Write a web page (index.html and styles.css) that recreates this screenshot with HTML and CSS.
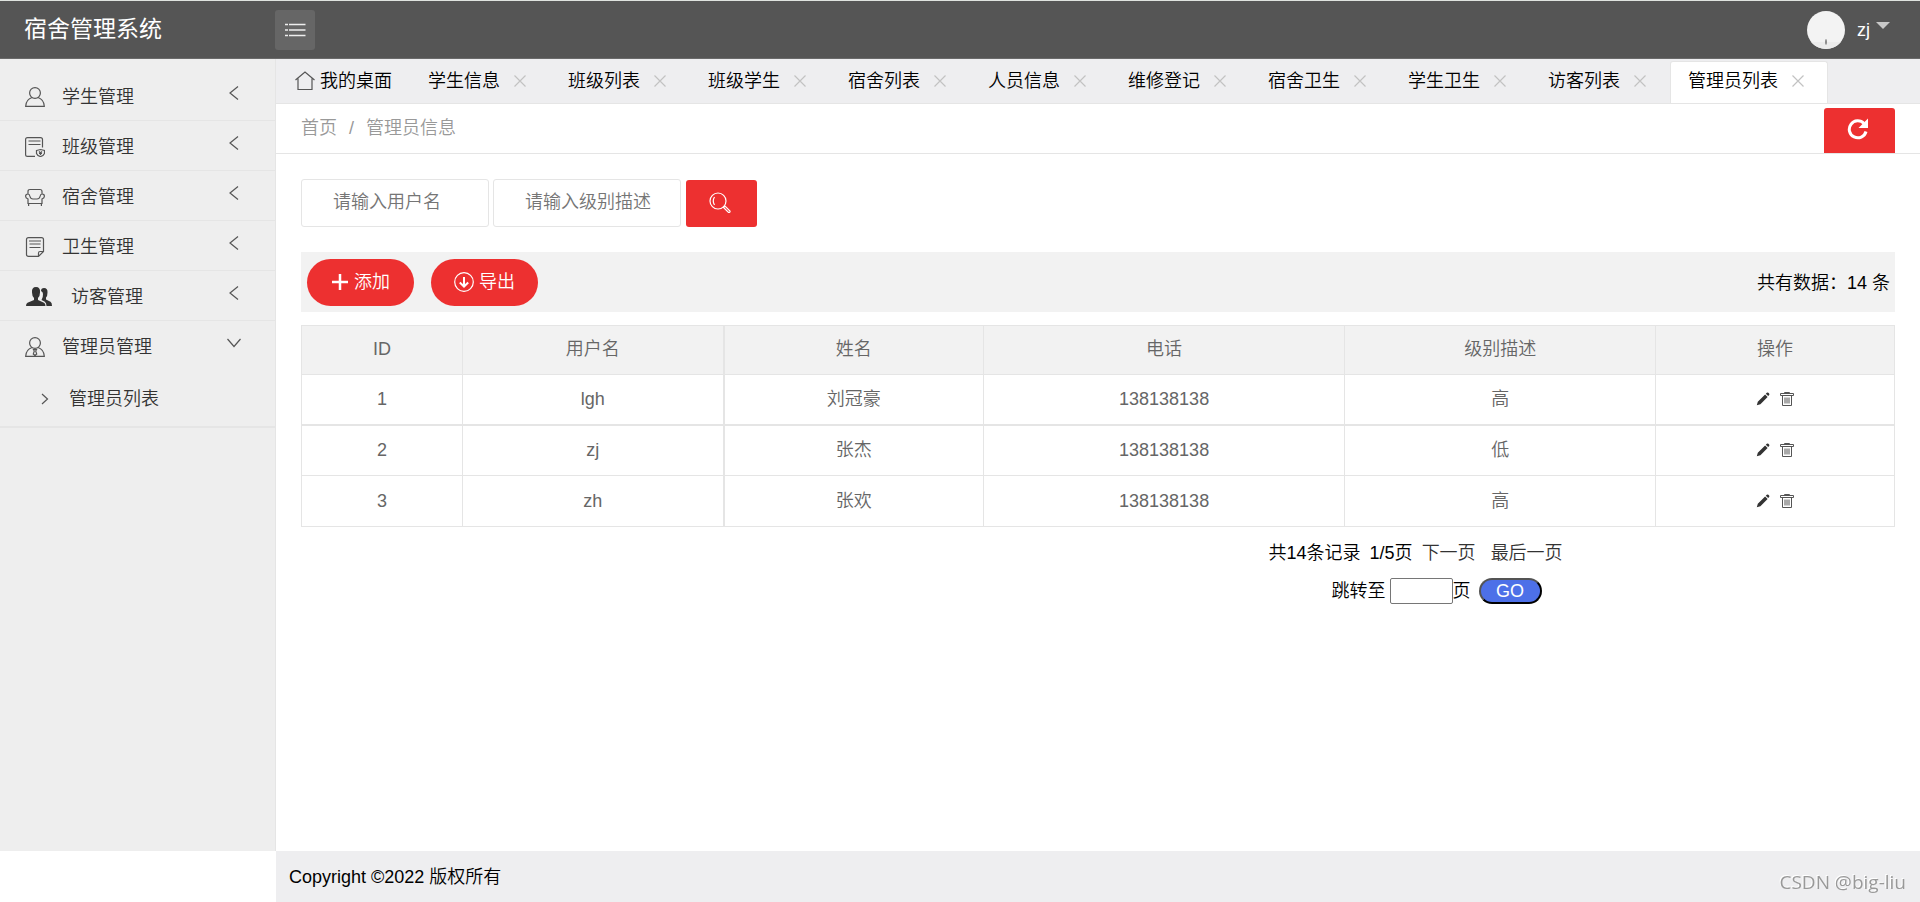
FILE: index.html
```html
<!DOCTYPE html>
<html lang="zh-CN">
<head>
  <meta charset="UTF-8" />
  <meta name="viewport" content="width=device-width, initial-scale=1.0" />
  <title>宿舍管理系统</title>
  <link rel="stylesheet" href="styles.css">
</head>

<body>
  <!-- shared icons -->
  <svg class="sprite" aria-hidden="true">
    <symbol id="left" viewBox="0 0 16 16"><path d="M12 1.500L4 8l8 6.500"/></symbol>
    <symbol id="close" viewBox="0 0 12 12"><path d="M.5.5l11 11M11.500.5l-11 11"/></symbol>
    <symbol id="edit" viewBox="0 0 14 14"><path d="M.8 13.300l1-3.600 7.300-7.200 2.500 2.500-7.200 7.300zM9.800 1.700l1-1q.8-.6 1.600.1l.7.6q.7.8 0 1.600l-.9.9z"/></symbol>
    <symbol id="trash" viewBox="0 0 14 14"><path d="M4.500 1.500V.5h5v1M.5 1.500h13v2H.5zM2.500 3.500v10h9v-10M5 5.500v6M7 5.500v6M9 5.500v6"/></symbol>
  </svg>

  <!-- HEADER -->
  <header>
    <h1>宿舍管理系统</h1>
    <button class="menu-btn" aria-label="菜单">
      <svg class="icon" width="22" height="14" viewBox="0 0 22 14"><path d="M1 1.500h3M5 1.500h16.500M1 7h3M5 7h16.500M1 12.500h3M5 12.500h16.500"/></svg>
    </button>
    <div class="user">
      <svg width="38" height="38" viewBox="0 0 38 38"><circle cx="19" cy="19" r="19" fill="#f3f3f3"/><path d="M4 31h30q-6 7-15 7T4 31z" fill="#ececec"/><ellipse cx="19" cy="31" rx="1" ry="3" fill="#888"/></svg>
      <a href="#">zj</a>
      <span class="caret"></span>
    </div>
  </header>

  <div class="layout">
    <!-- SIDEBAR -->
    <nav class="side">
      <a class="item" href="#">
        <svg class="icon" width="20" height="20" viewBox="0 0 20 20"><circle cx="10" cy="6" r="5.400"/><path d="M7 10.500Q1 12.500.7 19.300h18.600Q19 12.500 13 10.500"/></svg>
        <span>学生管理</span>
        <svg class="icon arrow" width="16" height="16"><use href="#left"/></svg>
      </a>
      <a class="item" href="#">
        <svg class="icon" width="20" height="20" viewBox="0 0 20 20"><path d="M10 19.400H2.500Q.6 19.400.6 17.500V2.500Q.6.6 2.500.6h13q2 0 2 1.900v8M3.500 4h12M3.500 7.500h12"/><path d="M11.500 13.500l4-1 4 1v3q-1 2.500-4 3-3-.5-4-3zM14 14.500l1.500 1.500 1.500-1.500M14 16.500h3M15.500 16v2"/></svg>
        <span>班级管理</span>
        <svg class="icon arrow" width="16" height="16"><use href="#left"/></svg>
      </a>
      <a class="item" href="#">
        <svg class="icon" width="20" height="20" viewBox="0 0 20 20"><path d="M3 7V4.500Q3 2.500 5 2.500h10q2 0 2 2V7M3 7Q.6 7 .6 9.200q0 1.800 2.400 2.800v4.500h14V12q2.400-1 2.400-2.800Q19.400 7 17 7q-1.500 0-2 2.500Q14.500 12 12 12H8q-2.500 0-3-2.500Q4.500 7 3 7zM3.600 16.500V19M16.400 16.500V19"/></svg>
        <span>宿舍管理</span>
        <svg class="icon arrow" width="16" height="16"><use href="#left"/></svg>
      </a>
      <a class="item" href="#">
        <svg class="icon" width="20" height="20" viewBox="0 0 20 20"><path d="M13.500 19.400H3.500q-2 0-2-2V2.500q0-1.900 2-1.900h13q2 0 2 1.900v12zM13.500 19v-3q0-1.500 1.500-1.500h3.500M4 4h12M4.500 7h11M4.500 10.500h11"/></svg>
        <span>卫生管理</span>
        <svg class="icon arrow" width="16" height="16"><use href="#left"/></svg>
      </a>
      <a class="item wide" href="#">
        <svg class="solid" width="26" height="20" viewBox="0 0 26 20"><path d="M15 4Q15 1 18 1q3.800 0 3.500 4.500Q21.500 9 20 10.500v2l4.500 2.200Q26 15.500 26 19h-5.500q0-3.500-2-4.500l-3-1.500q1.700-3 1.500-6 0-2-2-3z"/><path d="M10 0q4.500 0 4 5.500 0 3.500-2 5.500v2l6 2.700Q19.500 16.500 19.500 19H0q0-2.500 1.500-3.300L8 13v-2Q6 9 6 5.500 5.500 0 10 0z"/></svg>
        <span>访客管理</span>
        <svg class="icon arrow" width="16" height="16"><use href="#left"/></svg>
      </a>
      <a class="item open" href="#">
        <svg class="icon" width="20" height="20" viewBox="0 0 20 20"><circle cx="10" cy="6" r="5.400"/><path d="M7 10.500Q1 12.500.7 19.300h18.600Q19 12.500 13 10.500M8.500 12.500h3l-.8 1.500 1 3L10 18.500 8.300 17l1-3z"/></svg>
        <span>管理员管理</span>
        <svg class="icon arrow" width="16" height="16" viewBox="0 0 16 16"><path d="M1.500 4L8 11.500 14.500 4"/></svg>
      </a>
      <a class="sub" href="#">
        <svg class="icon" width="8" height="12" viewBox="0 0 8 12"><path d="M1 1l5.500 5L1 11"/></svg>
        <span>管理员列表</span>
      </a>
    </nav>

    <div class="main">
      <!-- TABS -->
      <ul class="tabs">
        <li class="home">
          <svg class="icon" width="20" height="20" viewBox="0 0 20 20"><path d="M.5 9L10 1l9.500 8M3 7.500V18.500h14V7.500"/></svg>
          <a href="#">我的桌面</a>
        </li>
        <li><a href="#">学生信息</a><button aria-label="关闭"><svg class="icon" width="12" height="12"><use href="#close"/></svg></button></li>
        <li><a href="#">班级列表</a><button aria-label="关闭"><svg class="icon" width="12" height="12"><use href="#close"/></svg></button></li>
        <li><a href="#">班级学生</a><button aria-label="关闭"><svg class="icon" width="12" height="12"><use href="#close"/></svg></button></li>
        <li><a href="#">宿舍列表</a><button aria-label="关闭"><svg class="icon" width="12" height="12"><use href="#close"/></svg></button></li>
        <li><a href="#">人员信息</a><button aria-label="关闭"><svg class="icon" width="12" height="12"><use href="#close"/></svg></button></li>
        <li><a href="#">维修登记</a><button aria-label="关闭"><svg class="icon" width="12" height="12"><use href="#close"/></svg></button></li>
        <li><a href="#">宿舍卫生</a><button aria-label="关闭"><svg class="icon" width="12" height="12"><use href="#close"/></svg></button></li>
        <li><a href="#">学生卫生</a><button aria-label="关闭"><svg class="icon" width="12" height="12"><use href="#close"/></svg></button></li>
        <li><a href="#">访客列表</a><button aria-label="关闭"><svg class="icon" width="12" height="12"><use href="#close"/></svg></button></li>
        <li class="active"><a href="#">管理员列表</a><button aria-label="关闭"><svg class="icon" width="12" height="12"><use href="#close"/></svg></button></li>
      </ul>

      <!-- BREADCRUMB -->
      <div class="crumb">
        <a href="#">首页</a><i>/</i><a href="#">管理员信息</a>
        <button class="btn refresh" aria-label="刷新">
          <svg width="22" height="22" viewBox="0 0 22 22"><path d="M17 5.500A8.500 8.500 0 1 0 19 13.500" fill="none" stroke="#fff" stroke-width="3"/><path d="M21 .5V10h-9.500z" fill="#fff"/></svg>
        </button>
      </div>

      <div class="content">
        <!-- SEARCH -->
        <form class="search">
          <input type="text" placeholder="请输入用户名" aria-label="用户名">
          <input type="text" placeholder="请输入级别描述" aria-label="级别描述">
          <button class="btn" type="button" aria-label="搜索">
            <svg class="icon" width="22" height="22" viewBox="0 0 22 22"><circle cx="9" cy="9" r="8"/><path d="M5.500 5q-2.500 4 0 8M14.500 15.500l1.500-1.500 5 5q.5 1.500-1.500 1.500z"/></svg>
          </button>
        </form>

        <div class="toolbar">
          <button class="btn round"><svg class="icon thick" width="18" height="18" viewBox="0 0 18 18"><path d="M9 1v16M1 9h16"/></svg>添加</button>
          <button class="btn round"><svg class="icon" width="20" height="20" viewBox="0 0 20 20"><circle cx="10" cy="10" r="9.300"/><path d="M10 5v9.500M5.800 10.500l4.200 4 4.200-4" stroke-width="2"/></svg>导出</button>
          <span class="count">共有数据：14 条</span>
        </div>

        <!-- TABLE -->
        <table>
          <colgroup><col class="c-id"><col class="c-user"><col class="c-name"><col class="c-tel"><col class="c-level"><col class="c-op"></colgroup>
          <thead>
            <tr><th>ID</th><th>用户名</th><th>姓名</th><th>电话</th><th>级别描述</th><th>操作</th></tr>
          </thead>
          <tbody>
            <tr>
              <td>1</td><td>lgh</td><td>刘冠豪</td><td>138138138</td><td>高</td>
              <td><a href="#" aria-label="编辑"><svg class="solid" width="14" height="14"><use href="#edit"/></svg></a><a href="#" aria-label="删除"><svg class="icon" width="14" height="14"><use href="#trash"/></svg></a></td>
            </tr>
            <tr>
              <td>2</td><td>zj</td><td>张杰</td><td>138138138</td><td>低</td>
              <td><a href="#" aria-label="编辑"><svg class="solid" width="14" height="14"><use href="#edit"/></svg></a><a href="#" aria-label="删除"><svg class="icon" width="14" height="14"><use href="#trash"/></svg></a></td>
            </tr>
            <tr>
              <td>3</td><td>zh</td><td>张欢</td><td>138138138</td><td>高</td>
              <td><a href="#" aria-label="编辑"><svg class="solid" width="14" height="14"><use href="#edit"/></svg></a><a href="#" aria-label="删除"><svg class="icon" width="14" height="14"><use href="#trash"/></svg></a></td>
            </tr>
          </tbody>
        </table>

        <!-- PAGER -->
        <div class="pager">
          <div class="pages">
            <span>共14条记录</span><span>1/5页</span><a href="#">下一页</a><a class="last" href="#">最后一页</a>
          </div>
          <form class="jump">
            <label for="page">跳转至</label><input type="text" id="page"><span>页</span><button type="button">GO</button>
          </form>
        </div>
      </div>

      <footer>Copyright ©2022 版权所有</footer>
    </div>
  </div>

  <div class="mark">CSDN @big-liu</div>
</body>
</html>
```
FILE: styles.css
```css
* {
  box-sizing: border-box;
}

body {
  margin: 0;
  min-height: 100vh;
  display: flex;
  flex-direction: column;
  font-family: "Liberation Sans", "Noto Sans CJK SC", sans-serif;
  font-size: 18px;
  font-weight: 350;
  line-height: 24px;
  color: #000;
  background: #fff;
}

a {
  color: #333;
  text-decoration: none;
}

button, input {
  font: inherit;
}

button {
  cursor: pointer;
}

svg {
  display: block;
  flex: none;
}

.sprite {
  position: absolute;
  width: 0;
  height: 0;
}

.icon {
  fill: none;
  stroke: #555;
  stroke-width: 1.2;
}

.solid {
  fill: #333;
}

/* HEADER */
header {
  height: 59px;
  display: flex;
  align-items: center;
  padding: 0 30px 0 24px;
  background: #555;
  border-top: 1px solid #dfe3df;
  border-bottom: 1px solid #6a6a6a;
}

header h1 {
  margin: 0;
  padding-bottom: 2px;
  width: 251px;
  font-size: 23px;
  font-weight: 400;
  color: #fff;
}

.menu-btn {
  width: 40px;
  height: 40px;
  padding: 0 9px;
  border: none;
  border-radius: 3px;
  background: #666;
}

.menu-btn .icon {
  stroke: #eee;
  stroke-width: 1.6;
}

.user {
  margin-left: auto;
  display: flex;
  align-items: center;
}

.user a {
  margin: 0 6px 0 12px;
  color: #fff;
}

.caret {
  margin-bottom: 8px;
  border: 7px solid transparent;
  border-top-color: #c8c8c8;
  border-bottom: none;
}

/* SIDEBAR */
.layout {
  flex: 1;
  display: flex;
}

.side {
  flex: none;
  width: 276px;
  margin-bottom: 51px;
  padding-top: 12px;
  background: #eee;
  border-right: 1px solid #e5e5e5;
}

.item {
  height: 50px;
  display: flex;
  align-items: center;
  gap: 17px;
  padding: 2px 33px 0 25px;
  border-bottom: 1px solid #e5e5e5;
}

.item.wide {
  gap: 19px;
  padding-left: 26px;
}

.item.open {
  border-bottom: none;
}

.arrow {
  margin: 0 0 8px auto;
}

.sub {
  height: 57px;
  display: flex;
  align-items: center;
  gap: 20px;
  padding-left: 41px;
  border-bottom: 2px solid #e5e5e5;
}

/* TABS */
.main {
  flex: 1;
  min-width: 0;
  display: flex;
  flex-direction: column;
}

.tabs {
  height: 45px;
  display: flex;
  margin: 0;
  padding: 2px 0 0;
  list-style: none;
  background: #eeeef0;
  border-bottom: 1px solid #e5e5e5;
}

.tabs li {
  display: flex;
  align-items: center;
  gap: 14px;
  padding: 0 23px 4px 17px;
  border: 1px solid transparent;
  border-bottom: none;
}

.tabs .home {
  gap: 5px;
  padding: 0 17px 4px 18px;
}

.tabs .active {
  background: #fff;
  border-color: #e5e5e5;
  border-radius: 3px 3px 0 0;
}

.tabs a {
  color: #000;
  white-space: nowrap;
}

.tabs button {
  padding: 0;
  border: none;
  background: none;
}

.tabs button .icon {
  stroke: #c2c2c2;
}

/* BREADCRUMB */
.crumb {
  height: 50px;
  display: flex;
  align-items: center;
  padding: 0 25px 2px;
  border-bottom: 1px solid #e5e5e5;
}

.crumb a, .crumb i {
  color: #999;
}

.crumb i {
  margin: 0 12px;
  font-style: normal;
}

.btn {
  width: 71px;
  height: 47px;
  display: flex;
  align-items: center;
  justify-content: center;
  padding: 0;
  border: none;
  border-radius: 3px;
  background: #ed3030;
  color: #fff;
}

.btn .icon {
  stroke: #fff;
}

.refresh {
  height: 45px;
  margin: 6px 0 0 auto;
  padding: 0 3px 3px 0;
  border-radius: 3px 3px 0 0;
}

/* CONTENT */
.content {
  flex: 1;
  padding: 25px;
}

.search {
  display: flex;
  align-items: flex-end;
  gap: 4px;
}

.search input {
  width: 188px;
  height: 48px;
  padding: 0 0 2px 31px;
  border: 1px solid #e5e5e5;
  border-radius: 3px;
}

.search input::placeholder {
  color: #757575;
}

.search .btn {
  margin-left: 1px;
  padding: 0 3px 2px 0;
}

.toolbar {
  height: 60px;
  display: flex;
  align-items: center;
  gap: 17px;
  margin: 25px 0 13px;
  padding: 0 5px 0 6px;
  background: #f2f2f2;
}

.btn.round {
  width: 107px;
  gap: 5px;
  border-radius: 24px;
}

.btn .thick {
  stroke-width: 2.5;
}

.count {
  margin-left: auto;
  padding-top: 2px;
}

/* TABLE */
table {
  width: 100%;
  table-layout: fixed;
  border-collapse: collapse;
  color: #666;
}

.c-id { width: 10.1%; }
.c-user { width: 16.4%; }
.c-name { width: 16.3%; }
.c-tel { width: 22.7%; }
.c-level { width: 19.5%; }
.c-op { width: 15%; }

th, td {
  height: 51px;
  padding: 0;
  border: 1px solid #e5e5e5;
  font-weight: 350;
  text-align: center;
}

th {
  height: 49px;
  padding-bottom: 2px;
  background: #f2f2f2;
}

th:nth-child(2), td:nth-child(2) {
  border-right-width: 2px;
}

tbody tr:first-child td {
  height: 50px;
  border-bottom-width: 2px;
}

td:last-child {
  padding-top: 2px;
}

td a {
  display: inline-block;
  margin: 0 5px;
}

td .icon {
  stroke-width: 1;
}

/* PAGER */
.pager {
  width: 39.3%;
  margin: 14px 0 0 auto;
}

.pages, .jump {
  display: flex;
  align-items: center;
}

.pages {
  gap: 9px;
}

.pages .last {
  margin-left: 6px;
}

.jump {
  margin-top: 13px;
  padding-left: 63px;
}

.jump input {
  width: 63px;
  height: 26px;
  margin-left: 4px;
  border: 1px solid #767676;
  border-radius: 2px;
}

.jump button {
  width: 63px;
  height: 26px;
  margin-left: 8px;
  padding: 0;
  border: 2px outset #000;
  border-radius: 13px;
  background: #4d70e8;
  color: #fff;
  line-height: 20px;
}

footer {
  height: 51px;
  padding: 14px 13px;
  background: #eeeef0;
}

.mark {
  position: fixed;
  right: 14px;
  bottom: 8px;
  font-family: "Open Sans", sans-serif;
  font-size: 19px;
  font-weight: 400;
  color: #999;
  text-shadow: -1px -1px 0 #fff;
}
```
